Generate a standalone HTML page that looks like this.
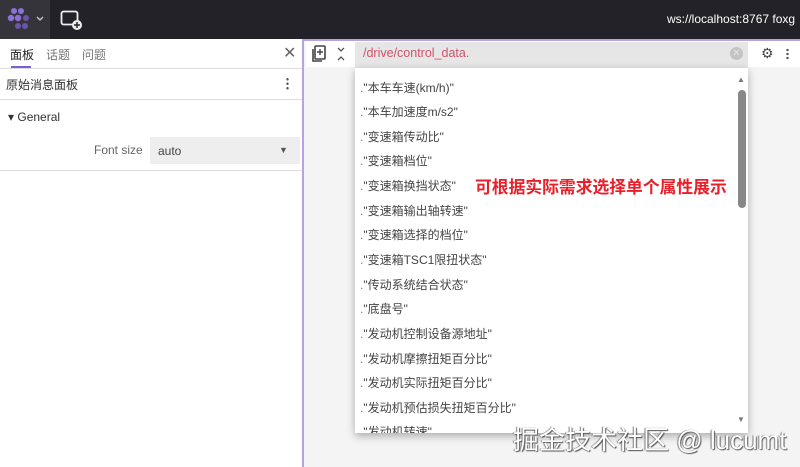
<!DOCTYPE html>
<html><head><meta charset="utf-8"><style>
*{margin:0;padding:0;box-sizing:border-box}
body{width:800px;height:467px;overflow:hidden;font-family:"Liberation Sans","Noto Sans CJK SC",sans-serif;background:#f4f4f5;position:relative;color:#333}
.top{position:absolute;left:0;top:0;width:800px;height:39px;background:#232228}
.logo{position:absolute;left:0;top:0;width:50px;height:39px;background:#35343a}
.left{position:absolute;left:0;top:39px;width:304px;height:428px;background:#fff;border-right:2px solid #b5a4e0}
.ab{position:absolute}
.item{position:absolute;left:360px;font-size:12px;color:#444;white-space:nowrap}
.item b{color:#3a8fd6;font-weight:normal}
</style></head><body>
<div class="top">
 <div class="logo">
  <svg width="50" height="39" viewBox="0 0 50 39"><g fill="#8d6fd8"><circle cx="14" cy="11" r="3"/><circle cx="21" cy="11" r="3"/><circle cx="11" cy="18" r="3.2"/><circle cx="18" cy="18" r="3.2"/><circle cx="26" cy="18" r="3" fill="#6a55a8"/><circle cx="18" cy="26" r="3" fill="#6a55a8"/><circle cx="25" cy="26" r="3" fill="#6a55a8"/></g><path d="M37 17l3 3 3-3" stroke="#ccc" fill="none" stroke-width="1.3"/></svg>
 </div>
 <svg class="ab" style="left:60px;top:9px" width="24" height="22" viewBox="0 0 24 22"><rect x="1.5" y="2.5" width="16" height="13" rx="2" fill="none" stroke="#eee" stroke-width="1.8"/><circle cx="17" cy="16" r="5" fill="#eee"/><path d="M17 13v6M14 16h6" stroke="#232228" stroke-width="1.5"/></svg>
 <div class="ab" style="left:667px;top:12px;color:#fff;font-size:12px;white-space:nowrap">ws://localhost:8767 foxg</div>
</div>
<div class="left">
 <div class="ab" style="left:10px;top:7px;font-size:12px;color:#222">面板</div>
 <div class="ab" style="left:11px;top:27px;width:20px;height:2px;background:#7c5fd0"></div>
 <div class="ab" style="left:46px;top:7px;font-size:12px;color:#777">话题</div>
 <div class="ab" style="left:82px;top:7px;font-size:12px;color:#777">问题</div>
 <div class="ab" style="left:283px;top:4px;font-size:16px;color:#666">✕</div>
 <div class="ab" style="left:0;top:29px;width:302px;height:1px;background:#ddd"></div>
 <div class="ab" style="left:6px;top:37px;font-size:12px;color:#333">原始消息面板</div>
 <div class="ab" style="left:286px;top:38px;width:3px;height:13px;background:radial-gradient(circle,#555 1.2px,transparent 1.3px) 0 0/3px 4.5px"></div>
 <div class="ab" style="left:0;top:60px;width:302px;height:1px;background:#ddd"></div>
 <div class="ab" style="left:8px;top:71px;font-size:12px;color:#333">▾ General</div>
 <div class="ab" style="left:94px;top:104px;font-size:12px;color:#666">Font size</div>
 <div class="ab" style="left:150px;top:98px;width:150px;height:27px;background:#eee"></div>
 <div class="ab" style="left:158px;top:105px;font-size:12px;color:#444">auto</div>
 <div class="ab" style="left:279px;top:106px;font-size:9px;color:#555">▼</div>
 <div class="ab" style="left:0;top:131px;width:302px;height:1px;background:#ddd"></div>
</div>
<div class="ab" style="left:304px;top:39px;width:496px;height:2px;background:#b5a4e0"></div>
<div class="ab" style="left:306px;top:41px;width:494px;height:26px;background:#fff"></div>
<svg class="ab" style="left:311px;top:45px" width="16" height="18" viewBox="0 0 16 18"><rect x="4" y="1" width="10" height="13" rx="1" fill="none" stroke="#444" stroke-width="1.6"/><path d="M2 4v12h9" fill="none" stroke="#444" stroke-width="1.6"/><path d="M9 4v6M6 7h6" stroke="#444" stroke-width="1.4"/></svg>
<svg class="ab" style="left:336px;top:47px" width="10" height="14" viewBox="0 0 10 14"><path d="M2 1l3 3 3-3M2 13l3-3 3 3" stroke="#555" fill="none" stroke-width="1.3"/></svg>
<div class="ab" style="left:355px;top:42px;width:393px;height:26px;background:#e6e6e6"></div>
<div class="ab" style="left:363px;top:46px;font-size:12.5px;color:#d0526b">/drive/control_data.</div>
<div class="ab" style="left:730px;top:47px;width:13px;height:13px;border-radius:50%;background:#c4c4c4;color:#e6e6e6;font-size:10px;line-height:13px;text-align:center">✕</div>
<div class="ab" style="left:761px;top:45px;font-size:14px;color:#444">⚙</div>
<div class="ab" style="left:786px;top:48px;width:3px;height:12px;background:radial-gradient(circle,#555 1.2px,transparent 1.3px) 0 0/3px 4px"></div>
<div class="ab" style="left:355px;top:68px;width:393px;height:365px;background:#fff;box-shadow:0 3px 8px rgba(0,0,0,.3)"></div>
<div class="ab" style="left:737px;top:75px;font-size:8px;color:#777">▲</div>
<div class="ab" style="left:738px;top:90px;width:8px;height:118px;border-radius:4px;background:#888"></div>
<div class="ab" style="left:737px;top:415px;font-size:8px;color:#777">▼</div>
<div class="item" style="top:79px"><b>.</b>"本车车速(km/h)"</div>
<div class="item" style="top:103px"><b>.</b>"本车加速度m/s2"</div>
<div class="item" style="top:128px"><b>.</b>"变速箱传动比"</div>
<div class="item" style="top:152px"><b>.</b>"变速箱档位"</div>
<div class="item" style="top:177px"><b>.</b>"变速箱换挡状态"</div>
<div class="item" style="top:202px"><b>.</b>"变速箱输出轴转速"</div>
<div class="item" style="top:226px"><b>.</b>"变速箱选择的档位"</div>
<div class="item" style="top:251px"><b>.</b>"变速箱TSC1限扭状态"</div>
<div class="item" style="top:276px"><b>.</b>"传动系统结合状态"</div>
<div class="item" style="top:300px"><b>.</b>"底盘号"</div>
<div class="item" style="top:325px"><b>.</b>"发动机控制设备源地址"</div>
<div class="item" style="top:350px"><b>.</b>"发动机摩擦扭矩百分比"</div>
<div class="item" style="top:374px"><b>.</b>"发动机实际扭矩百分比"</div>
<div class="item" style="top:399px"><b>.</b>"发动机预估损失扭矩百分比"</div>
<div class="item" style="top:423px;height:10px;overflow:hidden"><b>.</b>"发动机转速"</div>
<div class="ab" style="left:475px;top:174px;font-size:16.8px;font-weight:bold;color:#e8202a;white-space:nowrap">可根据实际需求选择单个属性展示</div>
<div class="ab" style="left:513px;top:420px;font-size:26px;color:#fff;white-space:nowrap;text-shadow:1px 1px 1px #555,-1px 0 1px #777">掘金技术社区 @ lucumt</div>
</body></html>
